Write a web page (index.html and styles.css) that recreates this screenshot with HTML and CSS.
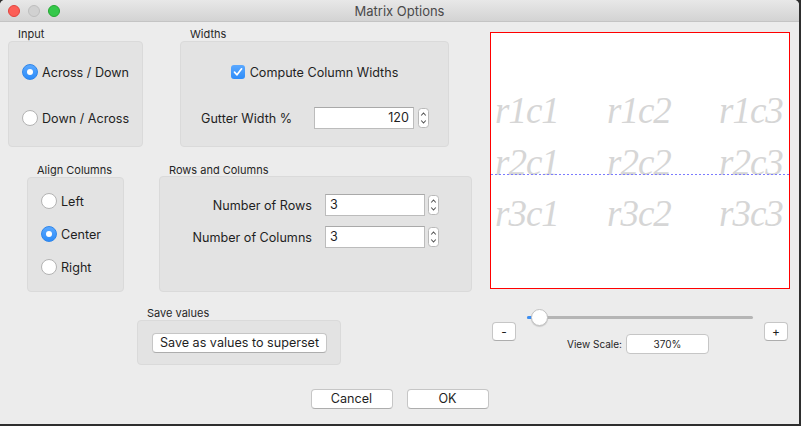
FILE: index.html
```html
<html lang="en">
<head>
    <meta charset="UTF-8">
    <title>Matrix Options</title>
    <link rel="stylesheet" href="styles.css">
</head>
<body>
    <div class="window">
        <div class="titlebar">
            <div class="lights">
                <span class="light close"></span>
                <span class="light min"></span>
                <span class="light max"></span>
            </div>
            <div class="title">Matrix Options</div>
        </div>

        <div class="content">
            <div class="left">
                <div class="row row-top">
                    <section class="group g-input">
                        <div class="group-label">Input</div>
                        <div class="group-box">
                            <label class="radio on"><span class="dot"></span>Across / Down</label>
                            <label class="radio"><span class="dot"></span>Down / Across</label>
                        </div>
                    </section>
                    <section class="group g-widths">
                        <div class="group-label">Widths</div>
                        <div class="group-box">
                            <label class="check">
                                <span class="box">
                                    <svg width="10" height="10" viewBox="0 0 10 10"><path d="M1.5 5.2 L4 7.8 L8.6 1.8" fill="none" stroke="#fff" stroke-width="1.7" stroke-linecap="round" stroke-linejoin="round"/></svg>
                                </span>
                                Compute Column Widths
                            </label>
                            <div class="field-row gutter">
                                <span class="field-label">Gutter Width %</span>
                                <span class="field num">120</span>
                                <span class="stepper"><svg width="11" height="20" viewBox="0 0 11 20"><rect x="0.5" y="0.5" width="10" height="19" rx="3" fill="#fff" stroke="#b9b9b9"/><path d="M3.2 7.5 L5.5 5 L7.8 7.5" fill="none" stroke="#555" stroke-width="1.1"/><path d="M3.2 12.5 L5.5 15 L7.8 12.5" fill="none" stroke="#555" stroke-width="1.1"/></svg></span>
                            </div>
                        </div>
                    </section>
                </div>

                <div class="row row-mid">
                    <section class="group g-align">
                        <div class="group-label">Align Columns</div>
                        <div class="group-box">
                            <label class="radio"><span class="dot"></span>Left</label>
                            <label class="radio on"><span class="dot"></span>Center</label>
                            <label class="radio"><span class="dot"></span>Right</label>
                        </div>
                    </section>
                    <section class="group g-rows">
                        <div class="group-label">Rows and Columns</div>
                        <div class="group-box">
                            <span class="field-label">Number of Rows</span>
                            <span class="field">3</span>
                            <span class="stepper"><svg width="11" height="20" viewBox="0 0 11 20"><rect x="0.5" y="0.5" width="10" height="19" rx="3" fill="#fff" stroke="#b9b9b9"/><path d="M3.2 7.5 L5.5 5 L7.8 7.5" fill="none" stroke="#555" stroke-width="1.1"/><path d="M3.2 12.5 L5.5 15 L7.8 12.5" fill="none" stroke="#555" stroke-width="1.1"/></svg></span>
                            <span class="field-label">Number of Columns</span>
                            <span class="field">3</span>
                            <span class="stepper"><svg width="11" height="20" viewBox="0 0 11 20"><rect x="0.5" y="0.5" width="10" height="19" rx="3" fill="#fff" stroke="#b9b9b9"/><path d="M3.2 7.5 L5.5 5 L7.8 7.5" fill="none" stroke="#555" stroke-width="1.1"/><path d="M3.2 12.5 L5.5 15 L7.8 12.5" fill="none" stroke="#555" stroke-width="1.1"/></svg></span>
                        </div>
                    </section>
                </div>

                <div class="row row-bottom">
                    <section class="group g-save">
                        <div class="group-label">Save values</div>
                        <div class="group-box">
                            <button class="push save">Save as values to superset</button>
                        </div>
                    </section>
                </div>
            </div>

            <div class="right">
                <div class="preview">
                    <div class="matrix">
                        <span>r1c1</span><span>r1c2</span><span>r1c3</span>
                        <span>r2c1</span><span>r2c2</span><span>r2c3</span>
                        <span>r3c1</span><span>r3c2</span><span>r3c3</span>
                    </div>
                    <div class="guide"></div>
                </div>

                <div class="scale-panel">
                    <button class="push small">-</button>
                    <div class="scale-mid">
                        <div class="slider">
                            <div class="track"></div>
                            <div class="fill"></div>
                            <div class="knob"></div>
                        </div>
                        <div class="view-row">
                            <span class="view-label">View Scale:</span>
                            <span class="view-field">370%</span>
                        </div>
                    </div>
                    <button class="push small">+</button>
                </div>
            </div>
        </div>

        <div class="footer">
            <button class="push wide">Cancel</button>
            <button class="push wide">OK</button>
        </div>
    </div>
</body>
</html>
```

FILE: styles.css
```css
* {
    box-sizing: border-box;
}

body {
    margin: 0;
    background-color: #2e2e2e; /* desktop peeking at the edges */
    font-family: 'Inter', 'Liberation Sans', sans-serif;
    font-size: 12.6px;
    color: #1f1f1f;
}

.window {
    width: 799px;
    height: 424px;
    background-color: #ececec;
    border-radius: 5px 5px 0 0;
    overflow: hidden;
}

/* title bar */
.titlebar {
    height: 22px;
    display: grid;
    grid-template-columns: 1fr auto 1fr;
    align-items: center;
    background: linear-gradient(#e8e8e8, #d3d3d3);
    border-bottom: 1px solid #c4c4c4;
}

.lights {
    display: flex;
    gap: 8px;
    padding-left: 8px;
}

.light {
    width: 12px;
    height: 12px;
    border-radius: 50%;
}

.light.close {
    background-color: #fc5f57;
    border: 1px solid #e0443e;
}

.light.min {
    background-color: #d1d1d1;
    border: 1px solid #bdbdbd;
}

.light.max {
    background-color: #34c84a;
    border: 1px solid #24a732;
}

.title {
    color: #4a4a4a;
    font-size: 13px;
}

/* layout */
.content {
    display: flex;
}

.left {
    width: 480px;
    padding-top: 5px;
}

.row {
    display: flex;
}

.row-mid {
    margin-top: 16px;
}

.row-bottom {
    margin-top: 14px;
}

.group-label {
    font-size: 11px;
    line-height: 14px;
    padding-left: 10px;
    color: #262626;
}

.group-box {
    background-color: #e3e3e3;
    border: 1px solid #dadada;
    border-radius: 4px;
}

/* Input */
.g-input {
    margin-left: 8px;
}

.g-input .group-box {
    width: 135px;
    height: 106px;
    padding: 20px 0 0 13px;
    display: flex;
    flex-direction: column;
    gap: 26px;
}

/* radios */
.radio {
    display: flex;
    align-items: center;
    gap: 4px;
    height: 20px;
}

.dot {
    width: 16px;
    height: 16px;
    border-radius: 50%;
    background-color: #fff;
    border: 1px solid #b3b3b3;
    display: flex;
    align-items: center;
    justify-content: center;
}

.radio.on .dot {
    background: linear-gradient(#5aa8ff, #2d8cf9);
    border-color: #2f86ea;
}

.radio.on .dot::after {
    content: '';
    width: 6px;
    height: 6px;
    border-radius: 50%;
    background-color: #fff;
}

/* Widths */
.g-widths {
    margin-left: 37px;
}

.g-widths .group-box {
    width: 269px;
    height: 106px;
    padding-top: 20px;
}

.check {
    display: flex;
    align-items: center;
    justify-content: center;
    gap: 5px;
    height: 20px;
}

.check .box {
    width: 14px;
    height: 14px;
    border-radius: 3px;
    background: linear-gradient(#5aa8ff, #2d8cf9);
    display: flex;
    align-items: center;
    justify-content: center;
}

.field-row {
    display: flex;
    align-items: center;
}

.gutter {
    margin-top: 25px;
    padding-left: 20px;
}

.gutter .field-label {
    width: 113px;
}

.field {
    display: block;
    width: 100px;
    height: 22px;
    line-height: 20px;
    background-color: #fff;
    border: 1px solid #bcbcbc;
    border-top-color: #a9a9a9;
    padding: 0 4px;
}

.field.num {
    text-align: right;
}

.stepper {
    display: block;
    height: 20px;
    margin-left: 4px;
}

.stepper svg {
    display: block;
}

/* Align Columns */
.g-align {
    margin-left: 27px;
}

.g-align .group-box {
    width: 97px;
    height: 115px;
    padding: 13px 0 0 13px;
    display: flex;
    flex-direction: column;
    gap: 13px;
}

/* Rows and Columns */
.g-rows {
    margin-left: 35px;
}

.g-rows .group-box {
    width: 313px;
    height: 116px;
    margin-top: -1px;
    padding-top: 17px;
    display: grid;
    grid-template-columns: 152px 100px 11px;
    column-gap: 13px;
    row-gap: 10px;
    align-items: center;
    align-content: start;
}

.g-rows .group-box .stepper {
    margin-left: -10px;
}

.g-rows .field-label {
    justify-self: end;
}

/* Save values */
.g-save {
    margin-left: 137px;
}

.g-save .group-box {
    width: 204px;
    height: 45px;
    padding: 12px 0 0 14px;
}

/* push buttons */
.push {
    font-family: inherit;
    font-size: 12.6px;
    color: #1f1f1f;
    background-color: #fff;
    border: 1px solid #c6c6c6;
    border-bottom-color: #adadad;
    border-radius: 4px;
    height: 20px;
    padding: 0;
    line-height: 18px;
}

.push.save {
    width: 175px;
}

.push.wide {
    width: 82px;
}

.push.small {
    width: 24px;
    height: 19px;
    line-height: 16px;
    font-size: 12px;
    margin-top: 13px;
}

/* preview */
.right {
    padding-top: 10px;
}

.preview {
    position: relative;
    margin-left: 10px;
    width: 300px;
    height: 257px;
    border: 1px solid #ff0000;
    background-color: #fff;
}

.matrix {
    display: grid;
    grid-template-columns: repeat(3, 112px);
    padding: 52px 0 0 4px;
    font-family: 'Liberation Serif', serif;
    font-style: italic;
    font-size: 37px;
    letter-spacing: -1px;
    line-height: 51.5px;
    color: #d6d6d6;
}

.guide {
    position: absolute;
    left: 0;
    right: 0;
    top: 141px;
    height: 1px;
    background: repeating-linear-gradient(90deg, #7b7bff 0 2px, transparent 2px 4px);
}

/* view scale */
.scale-panel {
    margin: 20px 0 0 12px;
    width: 296px;
    display: grid;
    grid-template-columns: 24px 1fr 24px;
    align-items: start;
}

.slider {
    position: relative;
    height: 16px;
    margin: 0 11px;
}

.track {
    position: absolute;
    left: 0;
    right: 0;
    top: 7px;
    height: 3px;
    border-radius: 2px;
    background-color: #b5b5b5;
}

.fill {
    position: absolute;
    left: 0;
    width: 8px;
    top: 7px;
    height: 3px;
    border-radius: 2px;
    background-color: #3b8ff5;
}

.knob {
    position: absolute;
    left: 4px;
    top: 0;
    width: 17px;
    height: 17px;
    border-radius: 50%;
    background-color: #fff;
    border: 1px solid #c2c2c2;
    box-shadow: 0 1px 1px rgba(0, 0, 0, 0.15);
}

.view-row {
    display: flex;
    align-items: center;
    margin-top: 9px;
    padding-left: 51px;
    font-size: 10px;
}

.view-label {
    width: 59px;
}

.view-field {
    width: 83px;
    height: 20px;
    line-height: 18px;
    text-align: center;
    background-color: #fff;
    border: 1px solid #c6c6c6;
    border-radius: 4px;
}

/* footer */
.footer {
    display: flex;
    justify-content: center;
    gap: 14px;
    margin-top: 24px;
}
```
